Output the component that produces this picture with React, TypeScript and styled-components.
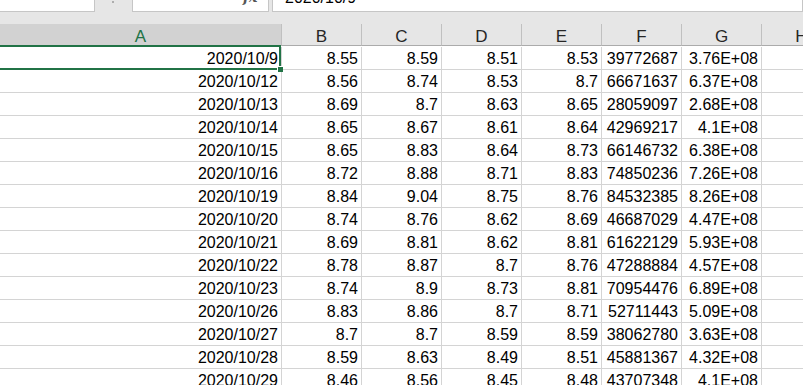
import React from "react";
import styled, { createGlobalStyle } from "styled-components";
import { X, Check } from "lucide-react";

const GlobalStyle = createGlobalStyle`
  html, body {
    margin: 0;
    padding: 0;
    background: #ffffff;
    overflow: hidden;
  }
  body {
    font-family: "Liberation Sans", Arial, sans-serif;
  }
`;

const rows: string[][] = [
  ["2020/10/9", "8.55", "8.59", "8.51", "8.53", "39772687", "3.76E+08"],
  ["2020/10/12", "8.56", "8.74", "8.53", "8.7", "66671637", "6.37E+08"],
  ["2020/10/13", "8.69", "8.7", "8.63", "8.65", "28059097", "2.68E+08"],
  ["2020/10/14", "8.65", "8.67", "8.61", "8.64", "42969217", "4.1E+08"],
  ["2020/10/15", "8.65", "8.83", "8.64", "8.73", "66146732", "6.38E+08"],
  ["2020/10/16", "8.72", "8.88", "8.71", "8.83", "74850236", "7.26E+08"],
  ["2020/10/19", "8.84", "9.04", "8.75", "8.76", "84532385", "8.26E+08"],
  ["2020/10/20", "8.74", "8.76", "8.62", "8.69", "46687029", "4.47E+08"],
  ["2020/10/21", "8.69", "8.81", "8.62", "8.81", "61622129", "5.93E+08"],
  ["2020/10/22", "8.78", "8.87", "8.7", "8.76", "47288884", "4.57E+08"],
  ["2020/10/23", "8.74", "8.9", "8.73", "8.81", "70954476", "6.89E+08"],
  ["2020/10/26", "8.83", "8.86", "8.7", "8.71", "52711443", "5.09E+08"],
  ["2020/10/27", "8.7", "8.7", "8.59", "8.59", "38062780", "3.63E+08"],
  ["2020/10/28", "8.59", "8.63", "8.49", "8.51", "45881367", "4.32E+08"],
  ["2020/10/29", "8.46", "8.56", "8.45", "8.48", "43707348", "4.1E+08"],
];

const columns = ["A", "B", "C", "D", "E", "F", "G", "H"];

const Page = styled.div`
  width: 803px;
  height: 385px;
  overflow: hidden;
  background: #ffffff;
`;

const FormulaBar = styled.div`
  display: flex;
  align-items: flex-start;
  height: 24px;
  background: #e6e6e6;
`;

const Box = styled.div<{ $width?: number; $grow?: boolean }>`
  box-sizing: border-box;
  height: 12px;
  background: #ffffff;
  border: 1px solid #c6c6c6;
  border-top: none;
  overflow: hidden;
  display: flex;
  align-items: flex-end;
  width: ${(p) => (p.$width ? `${p.$width}px` : "auto")};
  flex: ${(p) => (p.$grow ? "1" : "none")};
`;

const NameBox = styled(Box)`
  border-left: none;
`;

const Spacer = styled.div<{ $width: number }>`
  width: ${(p) => p.$width}px;
  height: 12px;
  display: flex;
  justify-content: center;
  overflow: hidden;
`;

const Dots = styled.span`
  width: 2px;
  height: 2px;
  border-radius: 1px;
  background: #9a9a9a;
  margin-top: 1px;
  margin-right: 1px;
`;

const IconSlot = styled.div<{ $left: number }>`
  margin-left: ${(p) => p.$left}px;
  margin-bottom: 8px;
  display: flex;
  color: #c0c0c0;
`;

const Fx = styled.span`
  margin-left: 34px;
  margin-bottom: 7px;
  font-family: "DejaVu Serif", "Liberation Serif", serif;
  font-style: italic;
  font-weight: bold;
  font-size: 14px;
  line-height: 14px;
  color: #555555;
`;

const FormulaText = styled.span`
  margin-left: 12px;
  padding-bottom: 5px;
  font-size: 16px;
  line-height: 16px;
  color: #000000;
`;

const Grid = styled.div`
  position: relative;
  display: grid;
  grid-template-columns: 282px repeat(7, 80px);
  grid-auto-rows: 23px;
`;

const HeaderCell = styled.div<{ $selected?: boolean }>`
  box-sizing: border-box;
  height: 22px;
  background: ${(p) => (p.$selected ? "#d2d2d2" : "#e6e6e6")};
  color: ${(p) => (p.$selected ? "#217346" : "#262626")};
  border-right: 1px solid #c0c0c0;
  border-bottom: 1px solid #ababab;
  text-align: center;
  font-size: 17px;
  line-height: 17px;
  padding-top: 4px;
  white-space: nowrap;
  overflow: hidden;
`;

const Cell = styled.div`
  box-sizing: border-box;
  height: 23px;
  border-right: 1px solid #d4d4d4;
  border-bottom: 1px solid #d4d4d4;
  padding: 2px 3px 0 0;
  text-align: right;
  font-size: 16px;
  line-height: 20px;
  color: #000000;
  white-space: nowrap;
  overflow: hidden;
`;

const HeaderRow = styled.div`
  display: contents;
`;

const Selection = styled.div`
  position: absolute;
  left: -2px;
  top: 21px;
  width: 283px;
  height: 25px;
  box-sizing: border-box;
  border: 2px solid #217346;
  pointer-events: none;
`;

const FillHandle = styled.div`
  position: absolute;
  right: -4px;
  bottom: -4px;
  width: 5px;
  height: 5px;
  background: #217346;
  border: 1px solid #ffffff;
  border-right: none;
  border-bottom: none;
`;

export default function App() {
  return (
    <Page>
      <GlobalStyle />
      <FormulaBar>
        <NameBox $width={95} />
        <Spacer $width={37}>
          <Dots />
        </Spacer>
        <Box $width={137}>
          <IconSlot $left={16}>
            <X size={16} strokeWidth={1.6} />
          </IconSlot>
          <IconSlot $left={28}>
            <Check size={16} strokeWidth={1.6} />
          </IconSlot>
          <Fx>fx</Fx>
        </Box>
        <Spacer $width={3} />
        <Box $grow>
          <FormulaText>2020/10/9</FormulaText>
        </Box>
      </FormulaBar>
      <Grid>
        <HeaderRow>
          {columns.map((c, i) => (
            <HeaderCell key={c} $selected={i === 0}>
              {c}
            </HeaderCell>
          ))}
        </HeaderRow>
        {rows.map((r, ri) => (
          <React.Fragment key={ri}>
            {r.map((v, ci) => (
              <Cell key={ci}>{v}</Cell>
            ))}
            <Cell />
          </React.Fragment>
        ))}
        <Selection>
          <FillHandle />
        </Selection>
      </Grid>
    </Page>
  );
}
